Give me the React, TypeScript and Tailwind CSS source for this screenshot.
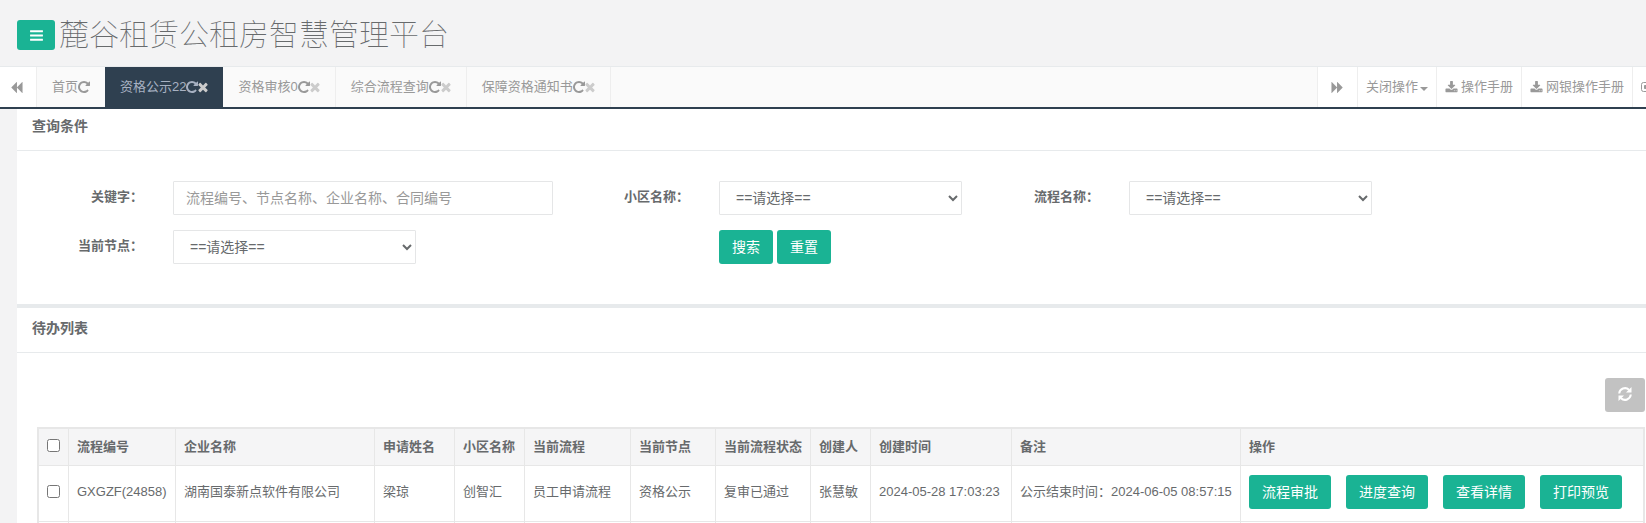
import type { ReactNode } from "react";

const ICONS = {
  bars: "M1664 1344v128q0 26-19 45t-45 19h-1408q-26 0-45-19t-19-45v-128q0-26 19-45t45-19h1408q26 0 45 19t19 45zm0-512v128q0 26-19 45t-45 19h-1408q-26 0-45-19t-19-45v-128q0-26 19-45t45-19h1408q26 0 45 19t19 45zm0-512v128q0 26-19 45t-45 19h-1408q-26 0-45-19t-19-45v-128q0-26 19-45t45-19h1408q26 0 45 19t19 45z",
  backward: "M1683 141q19-19 32-13t13 32v1472q0 26-13 32t-32-13l-710-710q-9-9-13-19v710q0 26-13 32t-32-13l-710-710q-19-19-19-45t19-45l710-710q19-19 32-13t13 32v710q4-10 13-19z",
  forward: "M109 1651q-19 19-32 13t-13-32v-1472q0-26 13-32t32 13l710 710q9 9 13 19v-710q0-26 13-32t32 13l710 710q19 19 19 45t-19 45l-710 710q-19 19-32 13t-13-32v-710q-4 10-13 19z",
  repeat: "M1664 256v448q0 26-19 45t-45 19h-448q-42 0-59-40-17-39 14-69l138-138q-148-137-349-137-104 0-198.5 40.5t-163.5 109.5-109.5 163.5-40.5 198.5 40.5 198.5 109.5 163.5 163.5 109.5 198.5 40.5q119 0 225-52t179-147q7-10 23-12 15 0 25 9l137 138q9 8 9.5 20.5t-7.5 22.5q-109 132-264 204.5t-327 72.5q-156 0-298-61t-245-164-164-245-61-298 61-298 164-245 245-164 298-61q147 0 284.5 55.5t244.5 156.5l130-129q29-31 70-14 39 17 39 59z",
  times: "M1490 1322q0 40-28 68l-136 136q-28 28-68 28t-68-28l-294-294-294 294q-28 28-68 28t-68-28l-136-136q-28-28-28-68t28-68l294-294-294-294q-28-28-28-68t28-68l136-136q28-28 68-28t68 28l294 294 294-294q28-28 68-28t68 28l136 136q28 28 28 68t-28 68l-294 294 294 294q28 28 28 68z",
  download: "M1344 1344q0-26-19-45t-45-19-45 19-19 45 19 45 45 19 45-19 19-45zm256 0q0-26-19-45t-45-19-45 19-19 45 19 45 45 19 45-19 19-45zm128-224v320q0 40-28 68t-68 28h-1472q-40 0-68-28t-28-68v-320q0-40 28-68t68-28h465l135 136q58 56 136 56t136-56l136-136h464q40 0 68 28t28 68zm-325-569q17 41-14 70l-448 448q-18 19-45 19t-45-19l-448-448q-31-29-14-70 17-39 59-39h256v-448q0-26 19-45t45-19h256q26 0 45 19t19 45v448h256q42 0 59 39z",
};

function Icon({ name, box = "0 0 1792 1792", className }: { name: keyof typeof ICONS; box?: string; className: string }) {
  return (
    <svg viewBox={box} fill="currentColor" aria-hidden="true" className={`shrink-0 ${className}`}>
      <path d={ICONS[name]} />
    </svg>
  );
}

const tabs = [
  { title: "首页", closable: false, style: "" },
  { title: "资格公示22", closable: true, style: "bg-[#2f4050] text-[#a7b1c2]" },
  { title: "资格审核0", closable: true, style: "border-r border-[#eee]" },
  { title: "综合流程查询", closable: true, style: "border-r border-[#eee]" },
  { title: "保障资格通知书", closable: true, style: "border-r border-[#eee]" },
];

const columns = [
  { title: "流程编号", width: "w-[107px]" },
  { title: "企业名称", width: "w-[199px]" },
  { title: "申请姓名", width: "w-[80px]" },
  { title: "小区名称", width: "w-[70px]" },
  { title: "当前流程", width: "w-[106px]" },
  { title: "当前节点", width: "w-[85px]" },
  { title: "当前流程状态", width: "w-[95px]" },
  { title: "创建人", width: "w-[60px]" },
  { title: "创建时间", width: "w-[141px]" },
  { title: "备注", width: "w-[229px]" },
  { title: "操作", width: "" },
];

const row = [
  "GXGZF(24858)",
  "湖南国泰新点软件有限公司",
  "梁琼",
  "创智汇",
  "员工申请流程",
  "资格公示",
  "复审已通过",
  "张慧敏",
  "2024-05-28 17:03:23",
  "公示结束时间：2024-06-05 08:57:15",
];

const actions = ["流程审批", "进度查询", "查看详情", "打印预览"];

function PrimaryButton({ children }: { children: ReactNode }) {
  return (
    <button type="button" className="h-[34px] shrink-0 rounded-[3px] bg-[#1ab394] px-[13px] text-sm text-white">
      {children}
    </button>
  );
}

function FieldLabel({ id, children }: { id: string; children: ReactNode }) {
  return (
    <label htmlFor={id} className="pt-1 pr-px text-right font-bold leading-6 whitespace-nowrap">
      {children}
    </label>
  );
}

function SelectField({ id }: { id: string }) {
  return (
    <div className="pl-[29px]">
      <select id={id} className="h-[34px] w-full max-w-[243px] rounded-[1px] border border-[#e5e6e7] bg-white pl-3 text-sm">
        <option>==请选择==</option>
      </select>
    </div>
  );
}

function PanelTitle({ children }: { children: ReactNode }) {
  return <h5 className="border-b border-[#e7eaec] pb-3 pl-[15px] text-sm font-bold leading-6">{children}</h5>;
}

export default function App() {
  return (
    <div className="flex h-screen flex-col overflow-hidden bg-[#f3f3f4] font-['Liberation_Sans','Noto_Sans_CJK_SC',sans-serif] text-[13px] text-[#676a6c]">
      <header className="flex h-[66px] shrink-0 items-center gap-1 pt-1 pl-[17px]">
        <button type="button" aria-label="菜单" className="flex h-[30px] w-[38px] items-center justify-center rounded-[3px] bg-[#1ab394] text-white">
          <Icon name="bars" className="size-[15px]" />
        </button>
        <h1 className="text-3xl font-thin">麓谷租赁公租房智慧管理平台</h1>
      </header>

      <nav className="flex h-[43px] shrink-0 border-t border-b-2 border-t-[#e7eaec] border-b-[#2f4050] bg-[#fafafa] text-[#999]">
        <button type="button" aria-label="向左" className="flex w-[37px] shrink-0 items-center justify-center border-r border-[#eee] bg-white pr-1">
          <Icon name="backward" className="size-[13px]" />
        </button>
        <div className="flex grow">
          {tabs.map((tab) => (
            <a key={tab.title} href="#" className={`flex items-center px-[15px] ${tab.style}`}>
              {tab.title}
              <Icon name="repeat" box="128 0 1536 1792" className="h-[14px] w-3" />
              {tab.closable && <Icon name="times" box="256 0 1280 1792" className="h-[14px] w-[10px] text-[#ccc]" />}
            </a>
          ))}
        </div>
        <div className="flex shrink-0 bg-white">
          <button type="button" aria-label="向右" className="flex w-[40px] items-center justify-center border-l border-[#eee]">
            <Icon name="forward" className="size-[13px]" />
          </button>
          <button type="button" className="flex items-center gap-[2px] border-l border-[#eee] px-2">
            关闭操作
            <svg viewBox="0 0 8 4" fill="currentColor" className="mt-1 h-1 w-2">
              <path d="M0 0h8L4 4z" />
            </svg>
          </button>
          <a href="#" className="flex items-center gap-[3px] border-l border-[#eee] px-2">
            <Icon name="download" className="size-[13px]" />
            操作手册
          </a>
          <a href="#" className="flex items-center gap-[3px] border-l border-[#eee] px-2">
            <Icon name="download" className="size-[13px]" />
            网银操作手册
          </a>
          <a href="#" aria-label="退出" className="flex w-[14px] items-center overflow-hidden border-l border-[#eee] pl-2">
            <svg viewBox="0 0 14 14" fill="none" stroke="currentColor" className="size-[14px] shrink-0">
              <rect x="0.5" y="2.5" width="13" height="9" rx="2" />
              <path d="M3.5 5.5h6v3h-6z" fill="currentColor" />
            </svg>
          </a>
        </div>
      </nav>

      <main className="pl-[17px]">
        <section className="bg-white pt-[5px]">
          <PanelTitle>查询条件</PanelTitle>
          <form className="grid grid-cols-[107fr_409fr_137fr_273fr_137fr_273fr_272fr] gap-y-[15px] pt-[30px] pr-px pb-10 pl-5">
            <FieldLabel id="keyword">关键字：</FieldLabel>
            <div className="pl-[29px]">
              <input
                id="keyword"
                type="text"
                placeholder="流程编号、节点名称、企业名称、合同编号"
                className="h-[34px] w-full rounded-[1px] border border-[#e5e6e7] px-3 text-sm placeholder:text-[#999]"
              />
            </div>
            <FieldLabel id="community">小区名称：</FieldLabel>
            <SelectField id="community" />
            <FieldLabel id="process">流程名称：</FieldLabel>
            <SelectField id="process" />
            <div />
            <FieldLabel id="node">当前节点：</FieldLabel>
            <SelectField id="node" />
            <div />
            <div className="flex gap-1 pl-[29px]">
              <PrimaryButton>搜索</PrimaryButton>
              <PrimaryButton>重置</PrimaryButton>
            </div>
          </form>
        </section>

        <section className="border-t-4 border-[#e7eaec] bg-white pt-2">
          <PanelTitle>待办列表</PanelTitle>
          <div className="pt-[25px] pr-px pl-5">
            <div className="flex justify-end">
              <button type="button" aria-label="刷新" className="flex h-[34px] w-10 items-center justify-center rounded-[3px] bg-[#c2c2c2] pb-[2px] text-white">
                <svg viewBox="0 0 14 14" className="size-[14px]">
                  <path d="M1.2 6.5A5.8 5.8 0 0 1 11 2.8M12.8 7.5A5.8 5.8 0 0 1 3 11.2" fill="none" stroke="currentColor" strokeWidth="2" />
                  <path d="M13.5 0v5.5H8zM.5 14V8.5H6z" fill="currentColor" />
                </svg>
              </button>
            </div>
            <div className="mt-[15px] border border-[#e7e7e7]">
              <table className="w-full table-fixed text-left">
                <thead>
                  <tr className="h-[37px] border-t border-b border-[#e7e7e7] bg-[#f5f5f6]">
                    <th className="w-[30px] border-x border-[#e7e7e7] pb-1">
                      <input type="checkbox" aria-label="全选" className="ml-2 block size-[13px]" />
                    </th>
                    {columns.map((col) => (
                      <th key={col.title} className={`border-r border-[#e7e7e7] px-2 font-bold whitespace-nowrap ${col.width}`}>
                        {col.title}
                      </th>
                    ))}
                  </tr>
                </thead>
                <tbody>
                  <tr className="h-14 border-b border-[#e7e7e7]">
                    <td className="border-x border-[#e7e7e7] pb-1">
                      <input type="checkbox" aria-label="选择 GXGZF(24858)" className="ml-2 block size-[13px]" />
                    </td>
                    {row.map((cell, idx) => (
                      <td key={idx} className="border-r border-[#e7e7e7] px-2 pb-1 whitespace-nowrap">
                        {cell}
                      </td>
                    ))}
                    <td className="border-r border-[#e7e7e7] px-2 pb-1">
                      <div className="flex gap-[15px]">
                        {actions.map((action) => (
                          <PrimaryButton key={action}>{action}</PrimaryButton>
                        ))}
                      </div>
                    </td>
                  </tr>
                  <tr className="h-14">
                    <td className="border-x border-[#e7e7e7]" />
                    {columns.map((col) => (
                      <td key={col.title} className="border-r border-[#e7e7e7]" />
                    ))}
                  </tr>
                </tbody>
              </table>
            </div>
          </div>
        </section>
      </main>
    </div>
  );
}
